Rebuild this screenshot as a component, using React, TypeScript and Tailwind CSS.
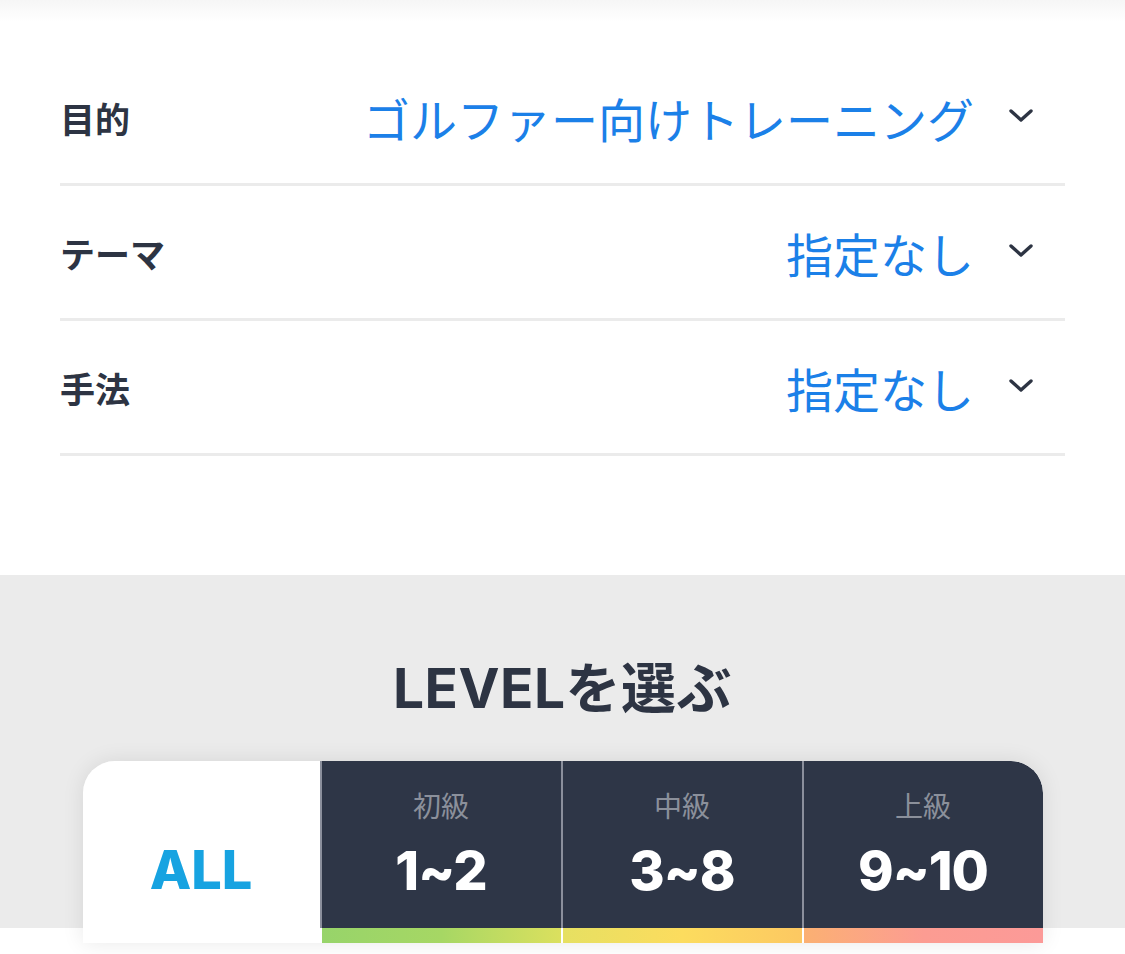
import React from 'react';

const JP = '"Noto Sans CJK JP", "Noto Sans", sans-serif';
const NUM = 'Inter, "Noto Sans CJK JP", sans-serif';

const FILTERS = [
  { label: '目的', value: 'ゴルファー向けトレーニング' },
  { label: 'テーマ', value: '指定なし' },
  { label: '手法', value: '指定なし' },
];

const LEVELS = [
  { sub: '初級', range: '1~2', bar: 'bg-linear-to-r from-[#97d46a] via-[#a6d764] to-[#dbe05e]' },
  { sub: '中級', range: '3~8', bar: 'bg-linear-to-r from-[#e6e062] via-[#fcdc5e] to-[#fcc862]' },
  { sub: '上級', range: '9~10', bar: 'bg-linear-to-r from-[#fbb072] via-[#fc9c92] to-[#fc9a98]' },
];

function Chevron() {
  return (
    <svg width="26" height="16" viewBox="0 0 26 16" className="shrink-0">
      <polyline points="3,3 13,12 23,3" fill="none" stroke="#2d3443" strokeWidth="3.4" strokeLinecap="round" strokeLinejoin="round" />
    </svg>
  );
}

export default function App() {
  return (
    <div className="w-[1125px] h-[954px] overflow-hidden bg-white" style={{ fontFamily: JP }}>
      {/* header shadow from above */}
      <div className="h-[22px] bg-linear-to-b from-[#f6f6f6] to-white" />

      {/* Filter rows */}
      <div className="px-[60px] pt-[29px]">
        {FILTERS.map((f) => (
          <div key={f.label} className="flex items-center h-[135px] border-b-[3px] border-[#ebebeb]">
            <span className="text-[35px] font-bold text-[#2d3443] pt-[2px]">{f.label}</span>
            <span className="ml-auto text-[47px] text-[#1b80e8] leading-none">{f.value}</span>
            <span className="ml-[34px] mr-[31px] -mt-[3px]">
              <Chevron />
            </span>
          </div>
        ))}
      </div>

      {/* Level section */}
      <div className="mt-[119px] bg-[#ebebeb] h-[353px] flex flex-col items-center">
        <h2 className="mt-[82px] text-[55px] font-bold text-[#2d3443] leading-none tracking-[0.5px]" style={{ fontFamily: NUM }}>
          LEVEL<span style={{ fontFamily: JP }}>を選ぶ</span>
        </h2>

        <div className="shrink-0 mt-[45px] w-[960px] grid grid-cols-[237px_1fr_1fr_1fr] rounded-t-[32px] overflow-hidden shadow-[0_0_22px_rgba(0,0,0,0.09)] relative z-10">
          <div className="bg-white flex flex-col">
            <div className="h-[167px] flex items-center justify-center">
              <span className="text-[54px] font-extrabold text-[#17a3e1] leading-none mt-[50px]" style={{ fontFamily: NUM }}>ALL</span>
            </div>
            <div className="h-[15px] bg-white" />
          </div>
          {LEVELS.map((l, i) => (
            <div key={l.sub} className="flex flex-col bg-white">
              <div className={`h-[167px] bg-[#2e3647] border-l-2 border-[#8b8f9c] flex flex-col items-center ${i === 2 ? 'rounded-tr-[32px]' : ''}`}>
                <span className="mt-[30px] text-[28px] text-[#8b909b] leading-none">{l.sub}</span>
                <span className="mt-[25px] text-[54px] font-extrabold text-white leading-none tracking-[-1px]" style={{ fontFamily: NUM }}>{l.range}</span>
              </div>
              <div className={`h-[15px] ml-[2px] ${l.bar}`} />
            </div>
          ))}
        </div>
      </div>
    </div>
  );
}
